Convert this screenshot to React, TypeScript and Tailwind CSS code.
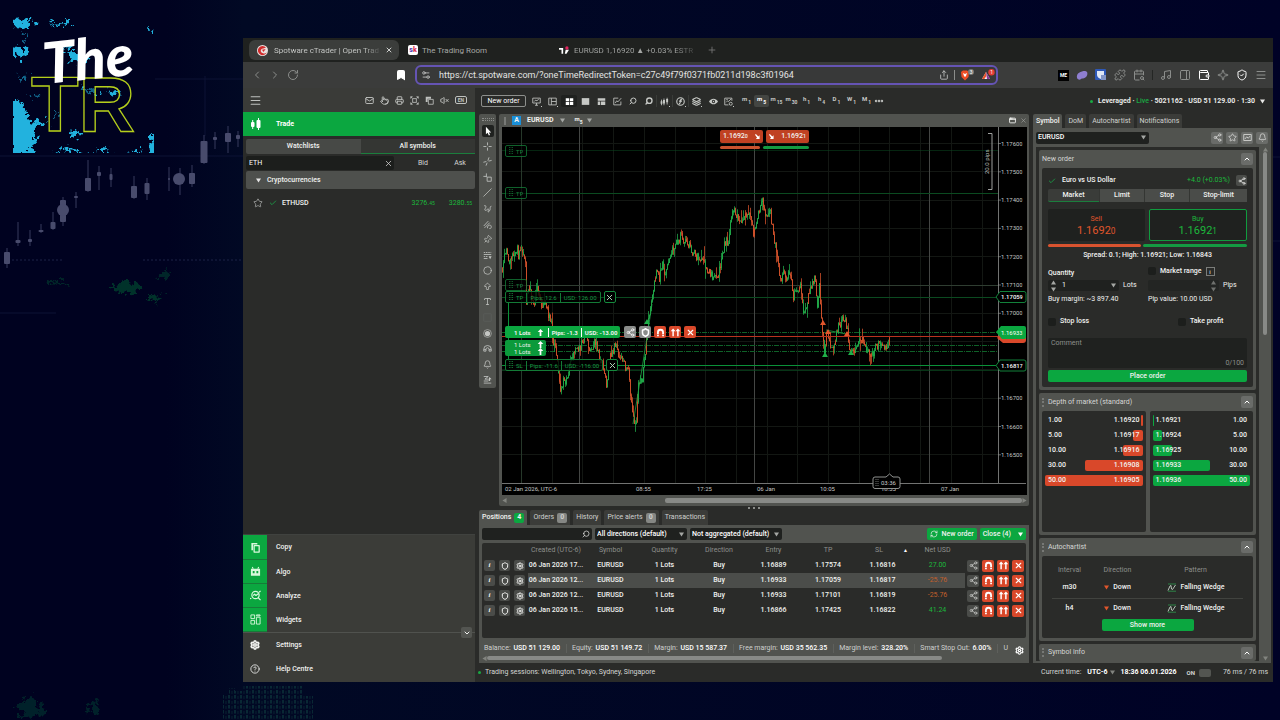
import React from "react";
import {
  Mail, Pointer, Printer, Search, VolumeX, Layers, Slash, Pin, Circle,
  ArrowBigUp, Type, Bell, Share2, Shield, Settings, X, Star, ChevronUp, ChevronDown,
  ChevronLeft, ChevronRight, RotateCw, Bookmark, Settings2, Share, Puzzle, Music, PanelRight,
  Wallet, Sparkle, Menu, Check, CircleHelp, ShieldCheck, AppWindow, Plus,
  CalendarSearch, Ellipsis, RefreshCw,
} from "lucide-react";

type IconType = React.ComponentType<{ className?: string; strokeWidth?: number }>;

/* ---------- small shared pieces ---------- */

function Price({ value }: { value: string }) {
  return (
    <>
      {value.slice(0, -1)}
      <span className="text-[75%]">{value.slice(-1)}</span>
    </>
  );
}

function Caret({ className = "" }: { className?: string }) {
  return (
    <svg viewBox="0 0 6 5" className={`h-[5px] w-[5px] shrink-0 ${className || "fill-[#a5a7a4]"}`} aria-hidden="true">
      <path d="M0 0h6L3 5z" />
    </svg>
  );
}

/* Builds an icon on a 12-unit grid from a stroked and a filled outline. */
function glyph(line: string, solid = "", width = 1.1): IconType {
  return function Glyph({ className }) {
    return (
      <svg viewBox="0 0 12 12" className={className} fill="none" stroke="currentColor" strokeWidth={width} strokeLinejoin="round" aria-hidden="true">
        {line && <path d={line} />}
        {solid && <path d={solid} fill="currentColor" stroke="none" />}
      </svg>
    );
  };
}

const GridIcon = glyph("", "M1 1.500h4.500v4H1zM6.500 1.500H11v4H6.500zM1 6.500h4.500v4H1zM6.500 6.500H11v4H6.500z");
const SolidIcon = glyph("", "M1 1.500h10v9H1z");
const SplitIcon = glyph("", "M1 1.500h10v3.500H1zM1 6h3v4.500H1zM5 6h6v4.500H5z");
const DisplayIcon = glyph("M1 1.500h10v6.500H1zM4 11h4M6 8v3M3 6l2-2 1.500 1L9 3");
const ColumnsIcon = glyph("M1 1.500h10v9H1zM4.500 1.500v9M4.500 6H11");
const ChartEditIcon = glyph("M7 1.500H1v9h9.500V6M3 8l2-3 1.500 1.500L11 1.500");
const SticksIcon = glyph("M2 3.500v7.500M5.300 2v9M9.500 1v9", "M.8 5.500h2.400V9H.8zM4 4h2.600v4.500H4zM8.200 2.500h2.600V7H8.200z");
const FunctionIcon = glyph("M6 1a5 5 0 1 0 0 10A5 5 0 0 0 6 1M8.300 3.200C6.500 2.500 6 4 5.800 6S5 9.200 3.800 8.700M4 5.500h4", "", 1.5);
const EyeIcon = glyph("", "M0 6c3-5 9-5 12 0-3 5-9 5-12 0zm6-2.200a2.200 2.200 0 1 0 0 4.400 2.200 2.200 0 0 0 0-4.400zm0 1.200a1 1 0 1 1 0 2 1 1 0 0 1 0-2z");
const TemplateIcon = glyph("M6 10.500H1v-9h9.500V5M3 7l2-2 1 1 3.500-3.500M9 7a2 2 0 1 0 0 4 2 2 0 0 0 0-4M3 3.500h2");
const FrameIcon = glyph("M3.500 3.500h5v5h-5zM1 1l2 2M11 1 9 3M1 11l2-2M11 11 9 9M1 3.500V1h2.500M8.500 1H11v2.500M1 8.500V11h2.500M8.500 11H11V8.500");
const StackIcon = glyph("M4.500 4.500H11V11H4.500z", "M1 1h7v2.500H3.500V8H1z");
const CopyIcon = glyph("M4.500 4h5.500v7H4.500z", "M1.500 1H8v1.800H3.300V9H1.500z", 1.4);
const RobotIcon = glyph("M2.500 1l1 2M9.500 1l-1 2", "M1 3h10v7.500H1zm2 2.500v2.500h2V5.500zm4 0v2.500h2V5.500z");
const AnalyzeIcon = glyph("M6 1.500a4 4 0 1 0 0 8 4 4 0 0 0 0-8M9 8.500l2.500 2.500M0 9.500l1.500-.5M3.500 6l1.500-1.500L6.500 6 9 4M10 2.500l1.500-1.500", "", 1.3);
const WidgetsIcon = glyph("M1 1h4v4H1zM1 7h4v4H1zM7 3.500h4V11H7zM7 1h4v1H7z", "", 1);
const CursorIcon = glyph("", "M3.500 1v9l2-1.800L7 11.500l1.500-.7L7 7.700h2.800z");
const CrossIcon = glyph("M6 .5v4M6 7.500v4M.5 6h4M7.500 6h4");
const FreeCrossIcon = glyph("M8 .5 6.500 5M5.500 7.500 4 11.500M.5 7l4-1M7.500 5.500l4-1");
const CropIcon = glyph("M4.500 .5v5M.5 4.500h4M5.500 5.500H11V11H5.500z");
const SquiggleIcon = glyph("M1.500 2.500C4 1 4.500 4 3 6s0 4 3 1-1 6 2 3 0-5 3-7.500");
const ScribbleIcon = glyph("M1 8 7 1.500M2 10.500 9 3.500M6 11c-1-4 5-6 5-2s-3 1-2 3");
const LevelsIcon = glyph("M1 2h2m1 0h2m1 0h2m1 0h1M1 4.700h10M1 7.400h2m1 0h2M1 10h5", "M7.500 7h4l-2 4z");
const ColourIcon = glyph("M1 1h10v10H1z", "", 0.8);
const RadarIcon = glyph("M6 .8a5.200 5.200 0 1 0 0 10.400A5.200 5.200 0 0 0 6 .8", "M6 2.500a3.500 3.500 0 1 0 0 7 3.500 3.500 0 0 0 0-7z", 0.8);
const HorseshoeIcon = glyph("M1 9.500V7a5 5 0 0 1 10 0v2.500H8V7a2 2 0 0 0-4 0v2.500zM1 7.500h3M8 7.500h3");
const ObjectsIcon = glyph("M1 2h6L2.500 5.500H7M1 8h6M1 10.800h10", "M8.500 2.500l3 3h-2V8h-2V5.500z");
const PictureIcon = glyph("M1 2h10v8H1zM2.500 8l2.500-3 2 2 2.500-3");

function MagnetIcon({ className = "" }: { className?: string }) {
  return (
    <svg viewBox="0 0 12 12" className={className} fill="none" stroke="currentColor" strokeWidth="2" aria-hidden="true">
      <path d="M3.2 10V5.8a2.8 2.8 0 0 1 5.6 0V10" />
      <path d="M2 8.2h2.4M7.6 8.2H10" stroke="#d9482a" strokeWidth=".7" />
    </svg>
  );
}

function DoubleUpIcon({ className = "" }: { className?: string }) {
  return (
    <svg viewBox="0 0 12 12" className={className} fill="currentColor" aria-hidden="true">
      <path d="M3.4 1.5 6 4.6H4.2V10H2.6V4.6H.8zM8.6 1.5l2.6 3.1H9.4V10H7.8V4.6H6z" />
    </svg>
  );
}

function UpArrow() {
  return (
    <svg viewBox="0 0 8 8" className="h-[7px] w-[7px] fill-white" aria-hidden="true">
      <path d="M4 0l3.200 3.500H5V8H3V3.500H.8z" />
    </svg>
  );
}

function FallArrow() {
  return (
    <svg viewBox="0 0 6 6" className="h-[5px] w-[5px] fill-white" aria-hidden="true">
      <path d="M0 1l1-1 3 3 1.500-1.500V6H1l1.500-1.500z" />
    </svg>
  );
}

function PatternIcon() {
  return (
    <svg viewBox="0 0 10 9" className="h-[9px] w-[10px]" fill="none" aria-hidden="true">
      <path d="M1 1h8M1 8.200h8" stroke="#2f9a4f" strokeWidth=".8" />
      <path d="M1 7.500 3 3l1-.5L4.500 6l1 .5L8.500 2" stroke="#d8e6da" strokeWidth=".8" />
    </svg>
  );
}

/* ---------- backdrop ---------- */

function Backdrop() {
  const candles = [
    [7, 248, 268, 252, 264, 6], [18, 222, 246, 240, 243, 5], [30, 230, 246, 239, 242, 4],
    [41, 224, 233, 230, 232, 5], [53, 212, 230, 222, 229, 5], [63, 197, 226, 200, 222, 6],
    [76, 192, 208, 196, 198, 4], [88, 160, 192, 178, 191, 6], [99, 166, 190, 172, 176, 4],
    [111, 168, 187, 174, 180, 3], [134, 176, 199, 186, 198, 6], [147, 178, 200, 183, 194, 5],
    [169, 167, 191, 178, 180, 2], [180, 168, 195, 175, 184, 6], [192, 165, 187, 173, 184, 6],
    [204, 135, 164, 141, 163, 7], [215, 132, 149, 137, 140, 4], [228, 126, 153, 133, 142, 6],
    [238, 131, 147, 135, 139, 4],
  ];
  return (
    <svg className="pointer-events-none absolute left-0 top-0" width="1280" height="720" viewBox="0 0 1280 720" aria-hidden="true">
      <defs>
        <filter id="rough" x="-20%" y="-20%" width="140%" height="140%">
          <feTurbulence type="fractalNoise" baseFrequency=".2" numOctaves="3" seed="4" />
          <feDisplacementMap in="SourceGraphic" scale="17" xChannelSelector="R" yChannelSelector="G" />
        </filter>
        <clipPath id="logoBox"><path d="M13 17h141v136H13z" /></clipPath>
        <linearGradient id="glow" x1="0" x2="1">
          <stop offset="0" stopColor="#000220" />
          <stop offset=".13" stopColor="#000220" />
          <stop offset=".19" stopColor="#010924" />
          <stop offset="1" stopColor="#000226" />
        </linearGradient>
        <pattern id="bars" width="6" height="5" patternUnits="userSpaceOnUse">
          <path d="M1 0v3.5" stroke="#0b2f38" strokeWidth="1.6" />
          <path d="M4 1v3" stroke="#08222f" strokeWidth="1" />
        </pattern>
      </defs>
      <rect width="1280" height="720" fill="url(#glow)" />
      <g stroke="#0d1334" strokeWidth="1">
        <path d="M0 156h243M155 79h88M205 76v60" />
        <path d="M0 313h56" />
        <path d="M12 260h50M143 260h100" strokeDasharray="2 2" stroke="#1c2347" />
        <path d="M1273 157h7M1273 241h7" />
      </g>
      <g fill="#484b6c" stroke="#363a5c">
        {candles.map(([x, top, bottom, a, b, w]) => (
          <g key={x}>
            <path d={`M${x} ${top}V${bottom}`} />
            <rect x={x - w / 2} y={a} width={w} height={b - a} rx="1" stroke="none" />
          </g>
        ))}
        <circle cx="179" cy="179" r="6" stroke="none" />
        <circle cx="63" cy="210" r="6" stroke="none" />
      </g>
      <g fill="#04302c" filter="url(#rough)">
        <path d="M112 286q10-6 20-3 10 2 8 8-16 6-28-1zM145 297q8-5 17-1-2 7-13 5z" />
        <path d="M48 282q8-3 22 1-10 3-22 1zM158 275l9-5 5 3-8 6z" opacity=".8" />
        <path d="M18 704l12-8 10 8 6 10-14 4-12-3zM88 704l8-4 4 10-8 8z" opacity=".7" />
      </g>
      <path d="M223 694h6v-6h6v3h8v-5h60v10h10v24h-90z" fill="url(#bars)" />
      <g clipPath="url(#logoBox)">
        <g fill="#20b2de" filter="url(#rough)">
          <path d="M11 20l18-1 8 4-8 4-18-1zM48 23l18-1 4-5 1 6-12 2zM11 48l11-1 5 6-5 5-11-4z" />
          <path d="M10 101l10 1 6 7 3 12 7 4-1 16-5 16H10zM32 120l14 2 6-2-8 5-12 1zM55 112l5 1-1 4-4-2z" />
          <path d="M62 50l12-2 6 7 10 4-6 5-12-4zM70 132l8-2 2 5-7 3zM54 152l18-4 12 5zM92 152l15-4 4 6zM126 153l12-3 6 5zM149 136l7-5v24h-6z" />
          <path d="M147 29l6 1-4 3zM80 90l12-2 8 4-4 4zM108 92l8-2 6 3-8 3z" />
          <path d="M18 78l8-2 2 4-8 1zM25 32l3 9-2 4-2-12zM30 93l12 1-6 4z" opacity=".55" />
        </g>
      </g>
      <text x="31" y="131" fontFamily="Liberation Sans" fontWeight="700" fontSize="78" fill="#000220" fillOpacity=".45" stroke="#b5cf1c" strokeWidth="1.300">TR</text>
      <text x="45" y="84" fontFamily="Lato" fontWeight="900" fontStyle="italic" fontSize="57" fill="#fff" transform="rotate(-6 46 83)">The</text>
      <circle cx="1269" cy="43" r="2" fill="#3ce05c" />
    </svg>
  );
}

/* ---------- browser chrome ---------- */

function TabStrip() {
  return (
    <div className="flex h-6 items-center whitespace-nowrap bg-[#1f211f] pl-1.5 text-[8px] text-[#a6a8a6]">
      <div className="flex h-5 w-[150px] items-center gap-1.5 rounded-md bg-[#3b3d3b] pl-2 pr-1.5 text-[#cdcfcd]">
        <svg viewBox="0 0 12 12" className="h-[11px] w-[11px] shrink-0" aria-hidden="true">
          <circle cx="6" cy="6" r="6" fill="#e9e1e0" />
          <path d="M9.800 2.800A5 5 0 1 0 10.800 7.500C9.500 9.500 6 9.800 4.600 8 3.200 6 4.800 3.500 7 3.800z" fill="#d22c2c" />
          <path d="M5.500 5.200 9.500 4.300 7 7.500z" fill="#d22c2c" />
        </svg>
        <span className="bg-gradient-to-r from-[#cdcfcd] from-85% to-[#555755] bg-clip-text text-transparent">Spotware cTrader | Open Trad</span>
        <button aria-label="Close tab" className="ml-auto"><X className="h-2 w-2" strokeWidth={3} /></button>
      </div>
      <div className="flex w-[154px] items-center gap-1 pl-[9px]">
        <span className="flex h-[10px] w-[10px] items-center justify-center rounded-xs bg-white text-[7px] font-bold text-[#4636b8]">s<b className="text-[#df3355]">k</b></span>
        <span>The Trading Room</span>
      </div>
      <div className="flex w-[146px] items-center gap-[5px] pl-1.5">
        <svg viewBox="0 0 12 10" className="h-[9px] w-[10px] shrink-0" aria-hidden="true">
          <path d="M0 2h5v7H3V4H0zM8 4h4l-3 5H7z" fill="#fff" />
          <circle cx="9.500" cy="2" r="2" fill="#e0245e" />
        </svg>
        <span className="bg-gradient-to-r from-[#a6a8a6] from-85% to-[#444644] bg-clip-text text-transparent">EURUSD 1,16920 ▲ +0.03% ESTR</span>
      </div>
      <button aria-label="New tab" className="ml-2 text-[#787a78]"><Plus className="h-2.5 w-2.5" /></button>
    </div>
  );
}

function AddressRow() {
  return (
    <div className="flex h-[26px] items-center bg-[#3b3c3b] text-[#8b8d8b]">
      <div className="flex w-[172px] items-center gap-1.5 pl-2">
        <button aria-label="Back"><ChevronLeft className="h-3 w-3" /></button>
        <button aria-label="Forward"><ChevronRight className="h-3 w-3" /></button>
        <button aria-label="Reload"><RotateCw className="h-3 w-3" /></button>
        <button aria-label="Bookmark" className="ml-auto mr-2"><Bookmark className="h-3 w-3 fill-white text-white" /></button>
      </div>
      <div className="flex h-5 flex-1 items-center rounded-md border-2 border-[#6554b4] bg-[#383939] pl-1 pr-px">
        <Settings2 className="h-2.5 w-2.5 text-[#c5c7c5]" />
        <input aria-label="Address" className="min-w-0 flex-1 bg-transparent pl-2 text-[9px] text-[#e3e4e3] outline-none" defaultValue="https://ct.spotware.com/?oneTimeRedirectToken=c27c49f79f0371fb0211d198c3f01964" />
        <Share className="h-2.5 w-2.5 text-[#c5c7c5]" />
        <span className="mx-[5px] h-2.5 w-px bg-[#8b8d8b]" />
        <svg viewBox="0 0 14 12" className="h-3 w-3.5" aria-hidden="true">
          <path d="M1 3l2-1.500h4L9 3l-.5 5L5 11.500 1.500 8z" fill="#ee4d25" />
          <path d="M3 4l1 3 1 1 1-1 1-3-2 1z" fill="#fff" />
          <circle cx="11" cy="3" r="3" fill="#777977" />
          <text x="9.800" y="5" fontSize="5" fill="#fff">3</text>
        </svg>
        <svg viewBox="0 0 14 12" className="ml-[7px] h-3 w-3.5" aria-hidden="true">
          <path d="M1 10l4-7 4 7z" fill="#f2f2f2" />
          <path d="M1 10l4-7 .4 4L3.400 10z" fill="#e8542c" />
          <path d="M5 3l4 7H6z" fill="#8a3a96" />
          <circle cx="10.500" cy="3.200" r="3.200" fill="#e33b33" />
          <text x="9.300" y="5.200" fontSize="5" fill="#fff">1</text>
        </svg>
      </div>
      <div className="flex w-[275px] items-center justify-end gap-[7px] pr-1.5">
        <span className="flex h-[11px] w-[11px] items-center justify-center bg-black text-[5px] font-bold text-white">ME</span>
        <svg viewBox="0 0 12 12" className="h-3 w-3" aria-hidden="true">
          <path d="M1 9C0 4 5 2 9 2c3 0 3 4 1 6-2 2-4 1-5 2s-3 1-4-1z" fill="#8f7fd0" />
        </svg>
        <svg viewBox="0 0 12 12" className="h-3 w-3" aria-hidden="true">
          <rect width="11" height="11" fill="#2e58b7" rx="1" />
          <path d="M2 2h7v4c0 2-2 3-3.500 4C4 9 2 8 2 6z" fill="#dfe7f5" />
          <path d="M6 6h5v5H6z" fill="#8295c6" />
        </svg>
        <Puzzle className="h-3 w-3" />
        <CalendarSearch className="h-3 w-3" />
        <span className="h-2.5 w-px bg-[#242624]" />
        <Music className="h-3 w-3" />
        <PanelRight className="h-3 w-3" />
        <Wallet className="h-3 w-3 text-white" />
        <Sparkle className="h-3 w-3" />
        <ShieldCheck className="h-3 w-3 text-white" />
        <Menu className="h-3 w-3" />
      </div>
    </div>
  );
}

/* ---------- left sidebar ---------- */

const sidebarTools: [string, IconType][] = [
  ["Messages", Mail], ["Quick trade", Pointer], ["Snapshots", Printer], ["Full screen", FrameIcon],
  ["Detach", StackIcon], ["Sound", VolumeX],
];

const menu: [string, IconType, boolean][] = [
  ["Copy", CopyIcon, true], ["Algo", RobotIcon, true], ["Analyze", AnalyzeIcon, true], ["Widgets", WidgetsIcon, true],
  ["Settings", Settings, false], ["Help Centre", CircleHelp, false],
];

function Sidebar() {
  return (
    <aside className="flex w-[232px] shrink-0 flex-col bg-[#2a2b29]">
      <div className="flex h-6 items-center bg-[#3a3b38] pl-1.5 text-[#bfc1be]">
        <button aria-label="Menu"><Menu className="h-[13px] w-[13px]" /></button>
        <div className="ml-auto flex items-center gap-[6px] pr-2">
          {sidebarTools.map(([label, Icon]) => (
            <button key={label} aria-label={label}><Icon className="h-[9px] w-[9px]" strokeWidth={2.5} /></button>
          ))}
          <button className="rounded-xs border border-[#bfc1be] px-0.5 text-[5px] font-bold leading-[6px]">EN</button>
        </div>
      </div>
      <button className="flex h-6 items-center gap-[15px] bg-[#0ba740] pl-2 font-bold text-white">
        <svg viewBox="0 0 10 12" className="h-3 w-[10px] fill-white" aria-hidden="true">
          <rect y="4" width="3.500" height="5" rx="1" /><rect x="1.200" y="2" width="1" height="9" />
          <rect x="5.500" y="2" width="4" height="8" rx="1" /><rect x="7" width="1" height="12" />
        </svg>
        Trade
      </button>
      <div className="mt-[3px] flex h-[15px] pl-[3px] font-medium">
        <button className="flex-1 rounded-l-xs bg-[#474946]">Watchlists</button>
        <button className="flex-1 border-b border-[#1b7e3d] bg-[#343633]">All symbols</button>
      </div>
      <div className="mt-px flex h-4 items-center pl-[3px] text-[#d5d6d4]">
        <label className="flex h-3.5 w-[148px] items-center rounded-xs bg-[#1c1e1c] pl-[3px] pr-px">
          <input aria-label="Search symbols" defaultValue="ETH" className="min-w-0 flex-1 bg-transparent text-white outline-none" />
          <X className="h-[9px] w-[9px]" />
        </label>
        <span className="w-[58px] text-center">Bid</span>
        <span className="w-4 text-center">Ask</span>
      </div>
      <button className="ml-[3px] flex h-[18px] items-center gap-1.5 rounded-xs bg-[#4e504d] pl-2.5 font-medium">
        <Caret className="fill-[#e4e4e4]" />
        Cryptocurrencies
      </button>
      <div className="mt-1.5 flex h-4 items-center pl-2.5 pr-[3px]">
        <Star className="mr-1.5 h-2.5 w-2.5 text-[#c5c7c5]" strokeWidth={1.500} />
        <Check className="mr-[5px] h-2 w-2 text-[#1c8f43]" strokeWidth={3} />
        <span className="font-medium">ETHUSD</span>
        <span className="ml-auto text-[#1cb83c]">3276.<small className="text-[5px]">45</small></span>
        <span className="ml-3.5 text-[#1cb83c]">3280.<small className="text-[5px]">55</small></span>
      </div>
      <nav className="relative mt-auto border-t border-[#40423f] bg-[#3b3c38] pb-px font-medium">
        {menu.map(([label, Icon, on], i) => (
          <a key={label} href="#menu" className={`flex items-center ${i === 0 ? "h-[25px]" : i === 4 ? "h-[25px] border-t border-[#50524e]" : "h-6"}`}>
            <span className={on ? "flex h-full w-6 items-center justify-center border-b border-[#167b38] bg-[#0ba740] text-[#d9f8dc]" : "flex h-full w-6 items-center justify-center"}>
              <Icon className={on ? "h-[11px] w-[11px]" : "h-2.5 w-2.5"} strokeWidth={i === 4 ? 4 : 2} />
            </span>
            <span className="pl-[9px]">{label}</span>
          </a>
        ))}
        <button aria-label="Collapse" className="absolute right-[3px] top-[92px] flex h-[11px] w-[11px] items-center justify-center rounded-xs bg-[#535551]"><ChevronDown className="h-2 w-2" strokeWidth={3} /></button>
      </nav>
    </aside>
  );
}

/* ---------- top toolbar ---------- */

const chartTools: [string, IconType][] = [
  ["Display", DisplayIcon], ["Layout", ColumnsIcon], ["Grid", GridIcon], ["Single", SolidIcon], ["Split", SplitIcon],
  ["Edit", ChartEditIcon], ["Zoom out", Search], ["Zoom in", Search], ["Chart type", SticksIcon],
  ["Indicators", FunctionIcon], ["Layers", Layers], ["Visibility", EyeIcon], ["Templates", TemplateIcon],
];
const frames = [["m", "1"], ["m", "5"], ["m", "15"], ["m", "30"], ["h", "1"], ["h", "4"], ["D", "1"], ["W", "1"], ["M", "1"]];

function Toolbar() {
  return (
    <div className="flex h-[26px] items-center pl-1.5 pr-1.5 text-[#c6c8c5]">
      <button className="mr-[3px] h-3 w-[45px] rounded-xs border border-[#8d8f8c] leading-[9px] text-white">New order</button>
      {chartTools.map(([label, Icon], i) => (
        <button key={label} aria-label={label} className={`flex h-3 w-4 items-center justify-center ${i === 7 || i === 8 || i === 9 ? "border-r border-[#3a3c39]" : ""} ${i === 2 ? "rounded-xs bg-[#1f211f] text-white" : ""}`}>
          <Icon className={i === 6 || i === 7 ? "h-2 w-2 -scale-x-100" : "h-[9px] w-[9px]"} strokeWidth={i === 7 ? 4 : 3} />
          {[0, 1, 8, 9, 10, 12].includes(i) && <span className="h-px w-px self-end bg-current" />}
        </button>
      ))}
      <div className="ml-0.5 flex">
        {frames.map(([unit, n], i) => (
          <button key={unit + n} className={`flex h-3 w-[15px] items-start justify-center text-[6px] font-bold leading-[7px] ${i === 1 ? "rounded-xs bg-[#434542] text-white" : ""}`}>
            {unit}<span className="pl-px pt-1 text-[5px]">{n}</span>
          </button>
        ))}
      </div>
      <button aria-label="More"><Ellipsis className="h-2.5 w-2.5" strokeWidth={4} /></button>
      <button className="ml-auto flex items-center gap-[5px] font-bold text-[#e7e8e6]">
        <span className="h-[3px] w-[3px] rounded-full bg-[#19a943]" />
        <span>Leveraged · <span className="font-medium text-[#19a943]">Live</span> · 5021162 · USD 51 129.00 · 1:30</span>
        <Caret className="fill-[#e7e8e6]" />
      </button>
    </div>
  );
}

/* ---------- chart ---------- */

const track = [
  502, 272, 505, 250, 509, 262, 512, 253, 517, 250, 518, 257, 521, 250, 525, 260, 526, 300, 529, 288, 533, 305,
  537, 288, 541, 305, 545, 298, 547, 310, 551, 325, 553, 345, 556, 352, 558, 372, 560, 388, 564, 378, 566, 382,
  570, 362, 575, 352, 581, 345, 585, 337, 590, 350, 595, 340, 600, 360, 604, 370, 606, 383, 610, 357, 615, 345,
  618, 355, 623, 364, 628, 372, 631, 405, 634, 426, 636, 418, 638, 384, 642, 378, 645, 350, 648, 322, 652, 292,
  656, 270, 659, 278, 662, 265, 665, 275, 668, 258, 674, 246, 680, 236, 685, 240, 690, 248, 696, 257, 703, 262,
  708, 270, 715, 279, 719, 270, 722, 252, 726, 240, 728, 243, 731, 215, 735, 211, 737, 216, 741, 220, 745, 215,
  748, 211, 751, 220, 753, 231, 757, 218, 762, 202, 764, 212, 769, 214, 770, 212, 773, 235, 778, 265, 781, 284,
  783, 272, 786, 278, 789, 272, 793, 296, 797, 290, 800, 287, 804, 316, 808, 297, 812, 285, 814, 275, 817, 303,
  819, 283, 821, 320, 824, 350, 827, 328, 830, 345, 833, 348, 836, 332, 842, 318, 844, 318, 847, 332, 850, 354,
  854, 354, 858, 342, 862, 337, 864, 348, 869, 352, 872, 353, 877, 345, 883, 343, 887, 350, 889, 341,
];

function makeCandles() {
  let seed = 77;
  const rand = () => {
    seed = (seed * 16807) % 2147483647;
    return seed / 2147483647;
  };
  const out: { x: number; o: number; c: number; hi: number; lo: number }[] = [];
  let prev = track[1];
  let k = 0;
  for (let x = 502; x <= 889; x += 1) {
    while (k + 3 < track.length && track[k + 2] < x) k += 2;
    const [x0, y0, x1, y1] = [track[k], track[k + 1], track[k + 2], track[k + 3]];
    const y = y0 + ((y1 - y0) * (x - x0)) / (x1 - x0) + (rand() - 0.5) * 9;
    out.push({ x, o: prev, c: y, hi: Math.min(prev, y) - rand() * rand() * rand() * 16, lo: Math.max(prev, y) + rand() * rand() * rand() * 16 });
    prev = y;
  }
  return out;
}
const candles = makeCandles();
const gridX = Array.from({ length: 17 }, (_, i) => 521 + i * 30.700).filter((x) => x < 998);
const axis = ["1.17600", "1.17500", "1.17400", "1.17300", "1.17200", "1.17100", "1.17000", "1.16900", "1.16800", "1.16700", "1.16600", "1.16500"];

function AxisText({ x, y, value, fill = "#c4c6c4" }: { x: number; y: number; value: string; fill?: string }) {
  return (
    <text x={x} y={y} fill={fill}>{value.slice(0, -1)}<tspan fontSize="5">{value.slice(-1)}</tspan></text>
  );
}

function ChartDrawing() {
  return (
    <svg viewBox="502 127 525 368" className="block h-auto w-full bg-black" fontSize="6">
      <g stroke="#131713">
        {gridX.map((x) => <path key={x} d={`M${Math.round(x) + 0.5} 127V483`} />)}
        {axis.map((v, i) => <path key={v} d={`M502 ${Math.round(143 + i * 28.300) + 0.5}H998`} />)}
      </g>
      <path d="M521.500 127V483" stroke="#26382a" />
      <path d="M579.500 127V483M754.500 127V483M929.500 127V483" stroke="#444644" />
      <g stroke="#0b4a20">
        <path d="M502 150.500H998" opacity=".5" /><path d="M502 193.500H998" /><path d="M502 297.500H998" />
        <path d="M502 370.500H998" opacity=".7" />
        <path d="M502 285.500H998" stroke="#2f3d31" />
        <path d="M502 345.500H998M502 351.500H998M502 332.500H998" stroke="#0f6128" strokeDasharray="5 1 1 1" />
        <path d="M502 365.500H998" stroke="#0a9038" />
        <path d="M508.500 302V326M508.500 338V361" stroke="#0a9038" />
      </g>
      {candles.map((c, i) => {
        const color = (c.c < c.o ? i % 9 !== 0 : i % 7 === 0) ? "#1fa546" : "#cd4f29";
        return (
          <g key={c.x} stroke={color}>
            <path d={`M${c.x + 0.5} ${c.hi.toFixed(1)}V${c.lo.toFixed(1)}`} strokeWidth=".8" />
            <path d={`M${c.x + 0.5} ${Math.min(c.o, c.c).toFixed(1)}V${(Math.max(c.o, c.c) + 0.6).toFixed(1)}`} />
          </g>
        );
      })}
      <path d="M633 424l13-80 6-40M826 330l20 4" stroke="#1fa546" fill="none" strokeWidth=".8" />
      <path d="M820 325l3-5 3 5zM844 336l3-5 3 5zM825 334l3-5 3 5z" fill="#e2562c" />
      <path d="M848 355l3-5 3 5zM644 324l3-5 3 5zM822 357l3-5 3 5z" fill="#1fae48" />
      <path d="M502 336.500H998" stroke="#b8341f" />
      <path d="M502 483.500H1026M998.500 127V483" stroke="#8f918f" strokeWidth=".8" />
      <path d="M988 133.500h4v56h-4" stroke="#9ea09e" fill="none" />
      <text transform="translate(989 174) rotate(-90)" fill="#b9bbb9">20.0 pips</text>
      {axis.map((v, i) => (i === 7 || i === 8 ? null : (
        <g key={v}>
          <path d={`M998 ${143.500 + i * 28.300}h3`} stroke="#8f918f" strokeWidth=".7" />
          <AxisText x={1001} y={145.500 + i * 28.300} value={v} />
        </g>
      )))}
      <path d="M997 338l5-6h22a2 2 0 0 1 2 2v6a3 3 0 0 1-3 3h-20z" fill="#d9482a" />
      <path d="M996 332l5-6h23a2 2 0 0 1 2 2v9a2 2 0 0 1-2 2h-22z" fill="#0ba740" />
      <AxisText x={1001} y={334.500} value="1.16933" fill="#fff" />
      <g fill="#000" stroke="#12813a">
        <path d="M996 297l4-5.500h24a2 2 0 0 1 2 2v7a2 2 0 0 1-2 2h-24z" />
        <path d="M996 365.500l4-5.500h24a2 2 0 0 1 2 2v7a2 2 0 0 1-2 2h-24z" />
      </g>
      <g fontWeight="500">
        <AxisText x={1001} y={299} value="1.17059" fill="#fff" />
        <AxisText x={1001} y={367.500} value="1.16817" fill="#fff" />
      </g>
      <g fill="#c4c6c4">
        <text x="505" y="491">02 Jan 2026, UTC-6</text>
        <text x="636" y="491">08:55</text>
        <text x="697" y="491">17:25</text>
        <text x="757" y="491">06 Jan</text>
        <text x="820" y="491">10:05</text>
        <text x="881" y="491">18:35</text>
        <text x="941" y="491">07 Jan</text>
      </g>
      <path d="M875 477h11l3.500-3 3.500 3h5a2 2 0 0 1 2 2v7.500a2 2 0 0 1-2 2h-23a2 2 0 0 1-2-2V479a2 2 0 0 1 2-2z" fill="#000" stroke="#8f918f" />
      <path d="M876 479v7M878 479v7" stroke="#6d6f6d" strokeDasharray="1 1" />
      <text x="881" y="485" fill="#c9cbc9">03:36</text>
    </svg>
  );
}

function Ghost({ top, label, cells }: { top: string; label: string; cells?: string[] }) {
  return (
    <div className={`absolute left-[3px] flex h-3 items-center gap-[3px] text-[6px] text-[#1a9a46] ${top}`}>
      <div className={`flex h-full items-center rounded-xs border border-[#137a36] bg-black/80 ${cells ? "" : "opacity-80"}`}>
        <svg viewBox="0 0 4 8" className="mx-[3px] h-2 w-1" stroke="currentColor" strokeDasharray="1 1" aria-hidden="true"><path d="M.8 0v8M3.200 0v8" /></svg>
        <span className="pr-[3px]">{label}</span>
        {cells?.map((c) => <span key={c} className="border-l border-[#137a36] px-[3px]">{c}</span>)}
      </div>
      {cells && <button aria-label={`Remove ${label}`} className="flex h-3 w-3 items-center justify-center rounded-xs border border-[#158a3d] bg-black text-[#b4dcc0]"><X className="h-[9px] w-[9px]" strokeWidth={2.500} /></button>}
    </div>
  );
}

function RowActions({ big = false }: { big?: boolean }) {
  const red = "flex h-3 w-3 items-center justify-center rounded-xs bg-[#d9482a] text-white";
  const grey = big ? "flex h-3 w-3 items-center justify-center rounded-xs bg-[#8a8c8a] text-white" : "flex h-3 w-3 items-center justify-center rounded-xs bg-[#4a4c49] text-[#c8cac7]";
  return (
    <div className="flex gap-[3px]">
      <button aria-label="Share" className={grey}><Share2 className="h-[9px] w-[9px]" /></button>
      {big && <button aria-label="Protect" className={grey}><Shield className="h-[9px] w-[9px]" strokeWidth={4} /></button>}
      <button aria-label="Reverse" className={red}><MagnetIcon className="h-[11px] w-[11px]" /></button>
      <button aria-label="Double" className={red}><DoubleUpIcon className="h-[11px] w-[11px]" /></button>
      <button aria-label="Close" className={red}><X className="h-[9px] w-[9px]" strokeWidth={3} /></button>
    </div>
  );
}

const drawTools: [string, IconType][] = [
  ["Cursor", CursorIcon], ["Crosshair", CrossIcon], ["Marker", FreeCrossIcon], ["Crop", CropIcon], ["Line", Slash],
  ["Brush", SquiggleIcon], ["Curve", ScribbleIcon], ["Pin", Pin], ["Levels", LevelsIcon], ["Shape", Circle], ["Arrow", ArrowBigUp],
  ["Text", Type], ["Colour", ColourIcon], ["Target", RadarIcon], ["Magnet", HorseshoeIcon], ["Alert", Bell], ["Objects", ObjectsIcon],
];

function ChartPanel() {
  return (
    <div className="flex items-start gap-[3px]">
      <div className="flex h-[274px] w-[17px] shrink-0 flex-col items-center justify-between rounded-xs bg-[#51534f] pb-0.5 pt-1 text-[#c4c6c3]">
        <span className="h-[3px] w-3 border-y border-dotted border-[#8a8c89]" />
        {drawTools.map(([label, Icon], i) => (
          <button key={label} aria-label={label} className={`flex h-[12px] w-3 items-center justify-center rounded-xs ${i === 0 ? "bg-[#1f211f] text-white" : i === 12 ? "text-[#60625f]" : ""}`}>
            <Icon className={i === 0 ? "h-2.5 w-2.5" : i === 7 ? "h-[9px] w-[9px] rotate-45" : "h-[9px] w-[9px]"} />
          </button>
        ))}
      </div>
      <div className="min-w-0 flex-1 rounded-xs bg-[#51534f] pl-[3px] pr-0.5">
        <div className="flex h-[13px] items-center">
          <span className="ml-0.5 h-2 w-0.5 bg-[#777976]" />
          <span className="ml-1.5 flex h-[9px] w-[9px] items-center justify-center bg-[#1a8fd8] text-[7px] font-bold">A</span>
          <span className="ml-1.5 font-bold">EURUSD</span>
          <Caret className="ml-1.5 fill-[#a5a7a4]" />
          <span className="ml-2.5 flex h-[9px] items-start text-[6px] font-bold leading-[6px]">m<span className="pt-[3px] text-[5px]">5</span></span>
          <Caret className="ml-1 fill-[#a5a7a4]" />
          <button aria-label="Maximise" className="ml-auto"><AppWindow className="h-[7px] w-[7px]" strokeWidth={3} /></button>
          <button aria-label="Close chart" className="ml-1"><X className="h-[7px] w-[7px] text-[#a5a7a4]" /></button>
        </div>
        <div className="relative">
          <ChartDrawing />
          <Ghost top="top-[18px]" label="TP" />
          <Ghost top="top-[60px]" label="TP" />
          <Ghost top="top-[152px]" label="TP" />
          <Ghost top="top-[164px]" label="TP" cells={["Pips: 12.6", "USD: 126.00"]} />
          <div className="absolute left-[3px] top-[213px] flex h-4 w-[41px] flex-col justify-center rounded-xs bg-[#0b9a3b] text-[6px] leading-[7px]">
            <span className="flex items-center gap-1.5 pl-[9px]">1 Lots <UpArrow /></span>
            <span className="flex items-center gap-1.5 pl-[9px]">1 Lots <UpArrow /></span>
          </div>
          <div className="absolute left-[3px] top-[199px] flex h-3 items-center gap-1 text-[6px] font-bold">
            <div className="flex h-full items-center rounded-xs bg-[#0ba740]">
              <span className="flex items-center gap-1.5 pl-[9px] pr-1">1 Lots <UpArrow /></span>
              <span className="border-l border-white px-[3px]">Pips: -1.3</span>
              <span className="border-l border-white px-[3px]">USD: -13.00</span>
            </div>
            <RowActions big />
          </div>
          <Ghost top="top-[232px]" label="SL" cells={["Pips: -11.6", "USD: -116.00"]} />
          <div className="absolute left-[218px] top-[3px] flex gap-[3px] font-medium">
            <div className="w-[43px]">
              <button className="flex h-[13px] w-full items-center justify-between rounded-xs bg-[#c04122] px-[3px]"><span><Price value="1.16920" /></span><FallArrow /></button>
              <div className="mt-[3px] h-[3px] w-10 rounded-xs bg-[#c9532f]" />
            </div>
            <div className="w-[43px]">
              <button className="flex h-[13px] w-full items-center justify-between rounded-xs bg-[#c04122] px-[3px]"><FallArrow /><span><Price value="1.16921" /></span></button>
              <div className="-ml-[3px] mt-[3px] h-[3px] rounded-xs bg-[#149a42]" />
            </div>
          </div>
        </div>
        <div className="flex h-[11px] items-center justify-between">
          <Caret className="rotate-90 fill-[#82847f]" />
          <span className="ml-auto h-[5px] w-[357px] rounded-xs bg-[#888a87]" />
          <Caret className="-rotate-90 fill-[#82847f]" />
        </div>
      </div>
    </div>
  );
}

/* ---------- positions ---------- */

const rows = [
  ["06 Jan 2026 17...", "1.16889", "1.17574", "1.16816", "27.00"],
  ["06 Jan 2026 12...", "1.16933", "1.17059", "1.16817", "-25.76"],
  ["06 Jan 2026 12...", "1.16933", "1.17101", "1.16819", "-25.76"],
  ["06 Jan 2026 15...", "1.16866", "1.17425", "1.16822", "41.24"],
];
const positionTabs: [string, string][] = [["Positions", "4"], ["Orders", "0"], ["History", ""], ["Price alerts", "0"], ["Transactions", ""]];
const totals = [
  ["Balance:", "USD 51 129.00"], ["Equity:", "USD 51 149.72"], ["Margin:", "USD 15 587.37"],
  ["Free margin:", "USD 35 562.35"], ["Margin level:", "328.20%"], ["Smart Stop Out:", "6.00%"],
];

function Dropdown({ label, value, className }: { label: string; value: string; className: string }) {
  return (
    <label className={`flex h-3 items-center rounded-xs bg-[#1f211f] pl-0.5 pr-[3px] ${className}`}>
      <select aria-label={label} defaultValue={value} className="min-w-0 flex-1 appearance-none bg-transparent font-medium text-white outline-none">
        <option>{value}</option>
      </select>
      <Caret />
    </label>
  );
}

function Positions() {
  const cell = "flex h-[11px] w-[11px] items-center justify-center rounded-xs bg-[#4a4c49]";
  return (
    <section>
      <div className="flex h-[15px] gap-[3px]">
        {positionTabs.map(([label, n], i) => (
          <button key={label} className={`flex items-center gap-[3px] rounded-t-xs px-[3px] ${i === 0 ? "bg-[#51534f] font-medium" : "bg-[#3b3c39] text-[#cfd0ce]"}`}>
            {label}
            {n && <span className={`flex h-2.5 w-2.5 items-center justify-center rounded-xs font-bold ${i === 0 ? "bg-[#0ba740]" : "bg-[#858784]"}`}>{n}</span>}
          </button>
        ))}
      </div>
      <div className="bg-[#51534f] px-[3px] pt-[3px]">
        <div className="flex h-[15px] items-start gap-[3px]">
          <label className="flex h-3 w-[110px] items-center rounded-xs bg-[#1f211f] pr-0.5">
            <input aria-label="Search positions" className="min-w-0 flex-1 bg-transparent outline-none" />
            <Search className="h-2 w-2 -scale-x-100" />
          </label>
          <Dropdown label="Direction" value="All directions (default)" className="w-[92px]" />
          <Dropdown label="Aggregation" value="Not aggregated (default)" className="w-[92px]" />
          <button className="ml-auto flex h-3 items-center gap-1 rounded-xs bg-[#0ba740] px-[3px] font-medium"><RefreshCw className="h-2 w-2" />New order</button>
          <button className="flex h-3 items-center gap-[7px] rounded-xs bg-[#0ba740] px-[3px] font-medium">Close (4)<Caret className="fill-white" /></button>
        </div>
        <div className="h-[95px] rounded-xs bg-[#2a2b29]">
          <table className="w-full table-fixed border-collapse text-center">
            <colgroup>
              <col className="w-[46px]" /><col className="w-[56px]" /><col className="w-[53px]" /><col className="w-[55px]" />
              <col className="w-[54px]" /><col className="w-[55px]" /><col className="w-[54px]" /><col className="w-[55px]" />
              <col className="w-[55px]" /><col />
            </colgroup>
            <thead>
              <tr className="h-[15px] text-[#8d8f8c]">
                <td />
                {["Created (UTC-6)", "Symbol", "Quantity", "Direction", "Entry", "TP", "SL", "Net USD"].map((h) => (
                  <th key={h} scope="col" className="whitespace-nowrap p-0 font-normal">{h}{h === "SL" && <span className="float-right pr-0.5 text-[5px] text-white">▲</span>}</th>
                ))}
                <td />
              </tr>
            </thead>
            <tbody className="font-medium">
              {rows.map(([date, entry, tp, sl, net], i) => {
                const bg = i === 1 ? "bg-[#4b4d4a]" : "";
                return (
                  <tr key={date + i} className="h-[15px]">
                    <td className="p-0">
                      <div className="flex gap-1 pl-0.5">
                        <button aria-label="Info" className={`${cell} font-[Liberation_Serif,serif] font-bold italic`}>i</button>
                        <button aria-label="Protection" className={cell}><Shield className="h-2 w-2" strokeWidth={3} /></button>
                        <button aria-label="Options" className={cell}><Settings className="h-2 w-2" strokeWidth={3} /></button>
                      </div>
                    </td>
                    <td className={`whitespace-nowrap p-0 ${bg}`}>{date}</td>
                    {["EURUSD", "1 Lots", "Buy", entry, tp, sl].map((v, n) => <td key={n} className={`p-0 ${bg}`}>{v}</td>)}
                    <td className={`p-0 font-normal ${bg} ${net[0] === "-" ? "text-[#c2602c]" : "text-[#1cb83c]"}`}>{net}</td>
                    <td className="p-0 pl-0.5"><RowActions /></td>
                  </tr>
                );
              })}
            </tbody>
          </table>
        </div>
        <div className="flex h-[18px] items-center overflow-hidden whitespace-nowrap pl-0.5 pt-0.5 text-[#cfd0ce]">
          {totals.map(([k, v]) => (
            <span key={k} className="mr-[5px] border-r border-[#5e605c] pr-1.5">{k} <span className="pl-px font-medium text-white">{v}</span></span>
          ))}
          <span>U</span>
          <button aria-label="Columns" className="ml-auto pr-0.5 pt-1"><Settings className="h-[9px] w-[9px] text-white" strokeWidth={3} /></button>
        </div>
        <div className="flex h-[7px] items-start"><Caret className="rotate-90 fill-[#82847f]" /><span className="h-1 w-[455px] rounded-xs bg-[#888a87]" /></div>
      </div>
    </section>
  );
}

/* ---------- right panel ---------- */

function Card({ title, children, grip = true }: { title: string; children?: React.ReactNode; grip?: boolean }) {
  return (
    <section className={`rounded-xs bg-[#51534f] px-[3px] ${children ? "pb-[3px]" : ""}`}>
      <header className={`flex items-center justify-between text-[#d5d6d4] ${children ? "h-[18px]" : "h-[17px]"}`}>
        <h2 className={grip ? "border-l-2 border-dotted border-[#777976] pl-1" : ""}>{title}</h2>
        <button aria-label={`Collapse ${title}`} className="flex h-3 w-3 items-center justify-center rounded-xs bg-[#6a6c69] text-white"><ChevronUp className="h-2 w-2" strokeWidth={3} /></button>
      </header>
      {children}
    </section>
  );
}

const depth = [
  ["1.00", "1.16920", "1.16921", 2], ["5.00", "1.16917", "1.16924", 10], ["10.00", "1.16916", "1.16925", 20],
  ["30.00", "1.16908", "1.16933", 59], ["50.00", "1.16905", "1.16936", 100],
] as const;

function DepthSide({ buy = false }: { buy?: boolean }) {
  return (
    <div className="flex flex-1 flex-col gap-1 rounded-xs bg-[#2a2b29] px-[3px] pb-[46px] pt-1 font-medium">
      {depth.map(([size, bid, ask, w]) => (
        <div key={size} className="relative h-[11px]">
          <div className={buy ? "absolute left-0 h-full rounded-xs bg-[#0ba740]" : "absolute right-0 h-full rounded-xs bg-[#d9482a]"} style={{ width: `${w}%` }} />
          <div className="relative flex h-full items-center justify-between px-[3px]">
            <span>{buy ? ask : size}</span>
            <span>{buy ? size : bid}</span>
          </div>
        </div>
      ))}
    </div>
  );
}

function OrderForm() {
  return (
    <form className="flex flex-col rounded-xs bg-[#2a2b29] px-1.5 pb-[5px]">
      <div className="flex h-[21px] items-center pt-1">
        <Check className="mr-1.5 h-2 w-2 text-[#1c8f43]" strokeWidth={3} />
        <span className="font-medium">Euro vs US Dollar</span>
        <span className="ml-auto mr-1.5 text-[#1cb83c]">+4.0 (+0.03%)</span>
        <button type="button" aria-label="Share" className="flex h-[11px] w-[11px] items-center justify-center rounded-xs bg-[#4a4c49]"><Share2 className="h-2 w-2" /></button>
      </div>
      <div className="flex h-[13px] gap-px rounded-xs bg-[#343633] font-medium">
        {["Market", "Limit", "Stop", "Stop-limit"].map((t, i) => (
          <button type="button" key={t} className={i === 0 ? "w-[51px] rounded-l-xs border-b border-[#1b7e3d] bg-[#3a3c39]" : i === 3 ? "flex-1 bg-[#4a4c49]" : "w-11 bg-[#4a4c49]"}>{t}</button>
        ))}
      </div>
      <div className="mt-[7px] flex h-8 gap-1">
        <button type="button" className="flex-1 rounded-xs bg-[#1f211f] leading-3 text-[#e0562c]">
          Sell<span className="block text-[11px]"><Price value="1.16920" /></span>
        </button>
        <button type="button" className="flex-1 rounded-xs border border-[#109c3f] bg-[#1f211f] leading-3 text-[#1cb83c]">
          Buy<span className="block text-[11px]"><Price value="1.16921" /></span>
        </button>
      </div>
      <div className="mt-[3px] flex h-[3px] gap-0.5"><span className="w-[93px] rounded-xs bg-[#d9532f]" /><span className="flex-1 rounded-xs bg-[#149a42]" /></div>
      <p className="mt-1 text-center font-medium leading-[9px]">Spread: 0.1; High: 1.16921; Low: 1.16843</p>
      <div className="mt-[7px] flex">
        <div className="w-[100px]">
          <label htmlFor="qty" className="block h-[13px] pt-0.5 font-medium leading-[9px]">Quantity</label>
          <div className="flex items-center gap-1">
            <div className="flex h-[11px] w-[71px] items-center rounded-xs bg-[#1f211f] px-[3px]">
              <span className="flex flex-col gap-0.5"><Caret className="rotate-180 fill-[#a5a7a4]" /><Caret /></span>
              <input id="qty" defaultValue="1" className="min-w-0 flex-1 bg-transparent pl-1.5 outline-none" />
              <Caret />
            </div>
            <span>Lots</span>
          </div>
          <p className="pt-1 leading-[9px]">Buy margin: ~3 897.40</p>
        </div>
        <div className="flex-1">
          <div className="flex h-[13px] items-start gap-1">
            <input id="range" type="checkbox" className="h-2 w-2 appearance-none rounded-xs bg-[#1c1e1c]" />
            <label htmlFor="range" className="font-medium leading-[9px]">Market range</label>
            <span className="h-[9px] w-[9px] border border-[#7b7d7a] text-center text-[6px] leading-[7px]">i</span>
          </div>
          <div className="flex items-center gap-1">
            <div className="flex h-[11px] w-[71px] items-center justify-end rounded-xs bg-[#232523] px-[3px]">
              <input aria-label="Pips" className="min-w-0 flex-1 bg-transparent outline-none" />
              <span className="flex flex-col gap-0.5"><Caret className="rotate-180 fill-[#6f716e]" /><Caret className="fill-[#6f716e]" /></span>
            </div>
            <span>Pips</span>
          </div>
          <p className="pt-1 leading-[9px]">Pip value: 10.00 USD</p>
        </div>
      </div>
      <div className="mt-3 flex h-[11px] items-center">
        <input id="sl" type="checkbox" className="mr-1 h-2 w-2 appearance-none rounded-xs bg-[#1c1e1c]" />
        <label htmlFor="sl" className="w-[118px] font-medium">Stop loss</label>
        <input id="tp" type="checkbox" className="mr-1 h-2 w-2 appearance-none rounded-xs bg-[#1c1e1c]" />
        <label htmlFor="tp" className="font-medium">Take profit</label>
      </div>
      <div className="mt-[11px] h-[30px] rounded-xs bg-[#1f211f] px-[3px] pt-px text-[#8d8f8c]">
        <textarea aria-label="Comment" placeholder="Comment" className="block h-5 w-full resize-none bg-transparent leading-[9px] outline-none placeholder:text-[#8d8f8c]" />
        <p className="text-right leading-[8px]">0/100</p>
      </div>
      <button type="button" className="mt-0.5 h-3 rounded-xs bg-[#0ba740] font-medium">Place order</button>
    </form>
  );
}

function RightPanel() {
  return (
    <aside className="flex w-[238px] shrink-0 flex-col">
      <div className="flex h-[14px] gap-[3px]">
        {["Symbol", "DoM", "Autochartist", "Notifications"].map((t, i) => (
          <button key={t} className={`rounded-t-xs px-[3px] ${i === 0 ? "bg-[#51534f] font-medium" : "bg-[#3b3c39] text-[#d0d1cf]"}`}>{t}</button>
        ))}
      </div>
      <div className="flex flex-1 flex-col bg-[#51534f] px-[3px] pb-0.5 pt-[3px]">
        <div className="flex h-[13px] items-center gap-[3px]">
          <Dropdown label="Symbol" value="EURUSD" className="w-[113px]" />
          <span className="flex-1" />
          {[["Share", Share2], ["Favourite", Star], ["Chart", PictureIcon], ["Alert", Bell]].map(([label, I]) => {
            const Icon = I as IconType;
            return <button key={label as string} aria-label={label as string} className="flex h-3 w-3 items-center justify-center rounded-xs bg-[#6a6c69] text-[#d9dad8]"><Icon className="h-[9px] w-[9px]" /></button>;
          })}
        </div>
        <div className="mt-[3px] flex flex-1 gap-[3px]">
          <div className="flex flex-1 flex-col gap-[3px] bg-[#2a2b29] px-[3px] pt-[3px]">
            <Card title="New order" grip={false}><OrderForm /></Card>
            <Card title="Depth of market (standard)">
              <div className="flex gap-1"><DepthSide /><DepthSide buy /></div>
            </Card>
            <Card title="Autochartist">
              <div className="rounded-xs bg-[#2a2b29] px-2.5 pb-[7px] pt-1.5">
                <table className="w-full table-fixed text-center">
                  <colgroup><col className="w-[35px]" /><col className="w-[61px]" /><col /></colgroup>
                  <thead>
                    <tr className="h-4 text-[#8d8f8c]">{["Interval", "Direction", "Pattern"].map((h) => <th key={h} scope="col" className="p-0 font-normal">{h}</th>)}</tr>
                  </thead>
                  <tbody className="font-medium">
                    {["m30", "h4"].map((t, i) => (
                      <tr key={t} className={i === 0 ? "h-5 border-b border-[#41433f]" : "h-[21px]"}>
                        <td className="p-0">{t}</td>
                        <td className="p-0"><span className="flex items-center justify-center gap-1"><Caret className="fill-[#e0562c]" />Down</span></td>
                        <td className="p-0"><span className="flex items-center justify-center gap-1"><PatternIcon />Falling Wedge</span></td>
                      </tr>
                    ))}
                  </tbody>
                </table>
                <button className="mx-auto block h-3 w-[92px] rounded-xs bg-[#0ba740] font-medium">Show more</button>
              </div>
            </Card>
            <Card title="Symbol info" />
          </div>
          <div className="flex w-[6px] flex-col items-center">
            <Caret className="rotate-180 fill-[#82847f]" />
            <span className="mb-auto h-[183px] w-1 rounded-xs bg-[#888a87]" />
            <Caret className="fill-[#82847f]" />
          </div>
        </div>
      </div>
    </aside>
  );
}

/* ---------- page ---------- */

export default function App() {
  return (
    <div className="relative flex min-h-screen flex-col overflow-hidden bg-[#000225] pb-[38px] pl-[243px] pr-[7px] pt-[38px] font-[Roboto,Arial,sans-serif] text-[7px] leading-[9px] text-[#f1f2f0]">
      <Backdrop />
      <main className="relative flex flex-1 flex-col bg-[#2a2b29]">
        <TabStrip />
        <AddressRow />
        <div className="flex flex-1">
          <Sidebar />
          <div className="flex min-w-0 flex-1 flex-col pr-0.5">
            <Toolbar />
            <div className="flex flex-1 gap-1 pl-1">
              <div className="flex min-w-0 flex-1 flex-col">
                <ChartPanel />
                <div className="flex h-1 items-center justify-center gap-[3px]">
                  <i className="h-0.5 w-0.5 bg-[#8a8c89]" /><i className="h-0.5 w-0.5 bg-[#8a8c89]" /><i className="h-0.5 w-0.5 bg-[#8a8c89]" />
                </div>
                <Positions />
              </div>
              <RightPanel />
            </div>
            <footer className="flex h-[19px] items-center pl-[3px] pr-[3px] text-[#d5d6d4]">
              <span className="mr-1 h-[3px] w-[3px] rounded-full bg-[#19a943]" />
              <span>Trading sessions: Wellington, Tokyo, Sydney, Singapore</span>
              <span className="ml-auto mr-1.5">Current time:</span>
              <span className="font-bold text-white">UTC-6</span><Caret className="ml-0.5 mr-1.5 fill-[#82847f]" />
              <span className="font-bold text-white">18:36 06.01.2026</span>
              <span className="ml-2.5 mr-1 text-[6px] font-bold">ON</span>
              <button role="switch" aria-checked="false" aria-label="Connection sound" className="mr-3 h-2 w-3 rounded-xs bg-[#535551]" />
              <span>76 ms / 76 ms</span>
            </footer>
          </div>
        </div>
      </main>
    </div>
  );
}
